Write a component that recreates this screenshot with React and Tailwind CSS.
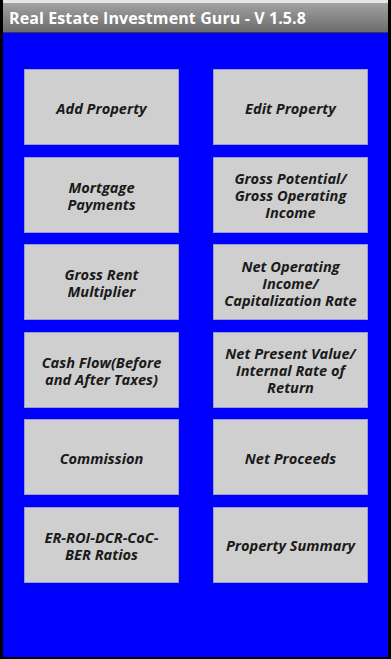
const buttons = [
  ['Add Property'],
  ['Edit Property'],
  ['Mortgage', 'Payments'],
  ['Gross Potential/', 'Gross Operating', 'Income'],
  ['Gross Rent', 'Multiplier'],
  ['Net Operating', 'Income/', 'Capitalization Rate'],
  ['Cash Flow(Before', 'and After Taxes)'],
  ['Net Present Value/', 'Internal Rate of', 'Return'],
  ['Commission'],
  ['Net Proceeds'],
  ['ER-ROI-DCR-CoC-', 'BER Ratios'],
  ['Property Summary'],
];

export default function App() {
  return (
    <div
      className="w-[391px] h-[659px] bg-black flex flex-col px-[3px] pb-[2px] overflow-hidden"
      style={{ fontFamily: '"Open Sans", "DejaVu Sans", sans-serif' }}
    >
      <div className="h-[3px] bg-[#e6e6e6] shrink-0" />
      <div className="h-[30px] shrink-0 bg-gradient-to-b from-[#a2a2a2] to-[#6c6c6c] flex items-center pl-[6px] border-b border-[#3a3a4a]">
        <span className="text-white font-bold text-[16px] leading-none tracking-[0.1px]">
          Real Estate Investment Guru - V 1.5.8
        </span>
      </div>
      <div className="flex-1 bg-[#0000ff] pt-[36px] pl-[21px] pr-[20px]">
        <div className="grid grid-cols-2 gap-x-[34px] gap-y-[11.6px]">
          {buttons.map((lines, i) => (
            <div
              key={i}
              className="h-[76px] pt-[2px] bg-[#cfcfcf] border border-[#9b9bd6] flex items-center justify-center text-[#1a1a1a] font-bold italic text-[14.6px] leading-[17px] text-center"
            >
              <p>
                {lines.map((l, j) => (
                  <span key={j}>
                    {j > 0 && <br />}
                    {l}
                  </span>
                ))}
              </p>
            </div>
          ))}
        </div>
      </div>
    </div>
  );
}
